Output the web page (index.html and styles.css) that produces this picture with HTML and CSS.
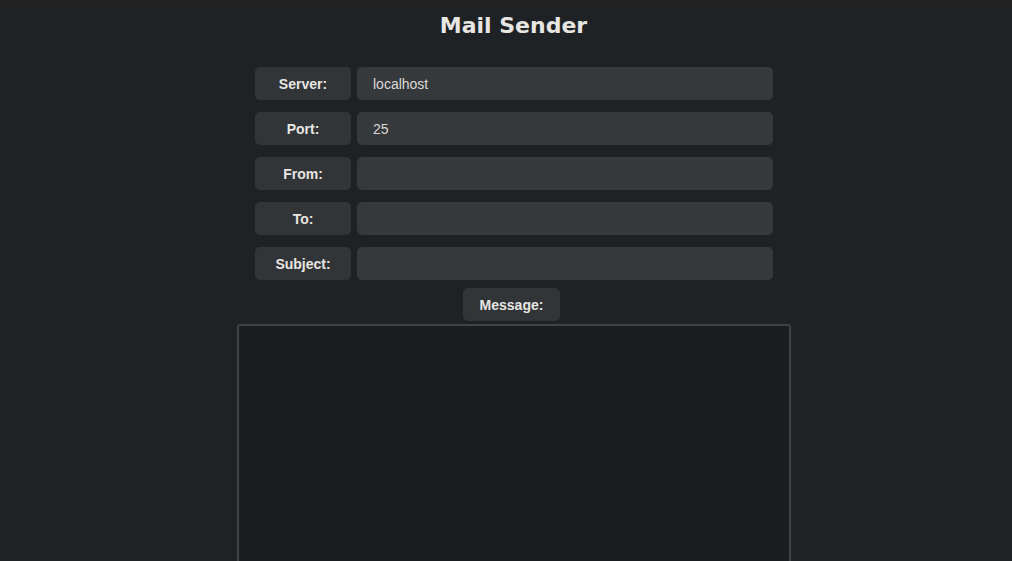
FILE: index.html
```html
<!DOCTYPE html>
<html lang="en">
<head>
    <meta charset="UTF-8">
    <title>Mail Sender</title>
    <link rel="stylesheet" href="styles.css">
</head>
<body>
    <h1>Mail Sender</h1>
    <form id="mailForm">
        <div class="field">
            <label class="field-label" for="server">Server:</label>
            <input class="field-input" id="server" type="text" value="localhost">
        </div>
        <div class="field">
            <label class="field-label" for="port">Port:</label>
            <input class="field-input" id="port" type="text" value="25">
        </div>
        <div class="field">
            <label class="field-label" for="from">From:</label>
            <input class="field-input" id="from" type="text">
        </div>
        <div class="field">
            <label class="field-label" for="to">To:</label>
            <input class="field-input" id="to" type="text">
        </div>
        <div class="field">
            <label class="field-label" for="subject">Subject:</label>
            <input class="field-input" id="subject" type="text">
        </div>
        <div class="message-block">
            <label class="field-label" for="message">Message:</label>
            <textarea id="message" class="message-input"></textarea>
        </div>
    </form>
</body>
</html>
```

FILE: styles.css
```css
html {
    background-color: #222222;
    overflow: hidden;
}

body {
    font-family: 'Liberation Sans', Arial, sans-serif;
    background-color: #1f2224;
    color: #e8e6e3;
    margin: 8px 0 0;
    padding: 0 0 0 15px;
}

h1 {
    font-family: 'DejaVu Sans', Verdana, sans-serif;
    font-size: 22px;
    font-weight: bold;
    text-align: center;
    margin: 0 0 29px;
    padding-top: 6px;
    line-height: 24px;
}

#mailForm {
    display: flex;
    flex-direction: column;
    align-items: center;
    gap: 12px;
}

.field {
    display: flex;
    gap: 6px;
    width: 518px;
    height: 33px;
    margin-left: 1px;
}

.field-label {
    width: 96px;
    flex: none;
    display: flex;
    align-items: center;
    justify-content: center;
    background-color: #323537;
    border-radius: 5px;
    font-size: 14px;
    font-weight: bold;
    color: #e8e6e3;
}

.field-input {
    flex: 1;
    box-sizing: border-box;
    background-color: #36393c;
    border: none;
    border-radius: 5px;
    padding: 0 16px;
    font-family: 'Liberation Sans', Arial, sans-serif;
    font-size: 14px;
    color: #dcdad6;
    outline: none;
}

.message-block {
    display: flex;
    flex-direction: column;
    align-items: center;
    gap: 3px;
    margin-top: -4px;
}

.message-block .field-label {
    height: 33px;
    width: 97px;
    margin-left: -4px;
}

.message-input {
    width: 554px;
    height: 300px;
    box-sizing: border-box;
    background-color: #1b1d1e;
    border: 2px solid #3e4346;
    border-radius: 3px;
    margin-left: 0;
    resize: none;
    color: #e8e6e3;
}
```
